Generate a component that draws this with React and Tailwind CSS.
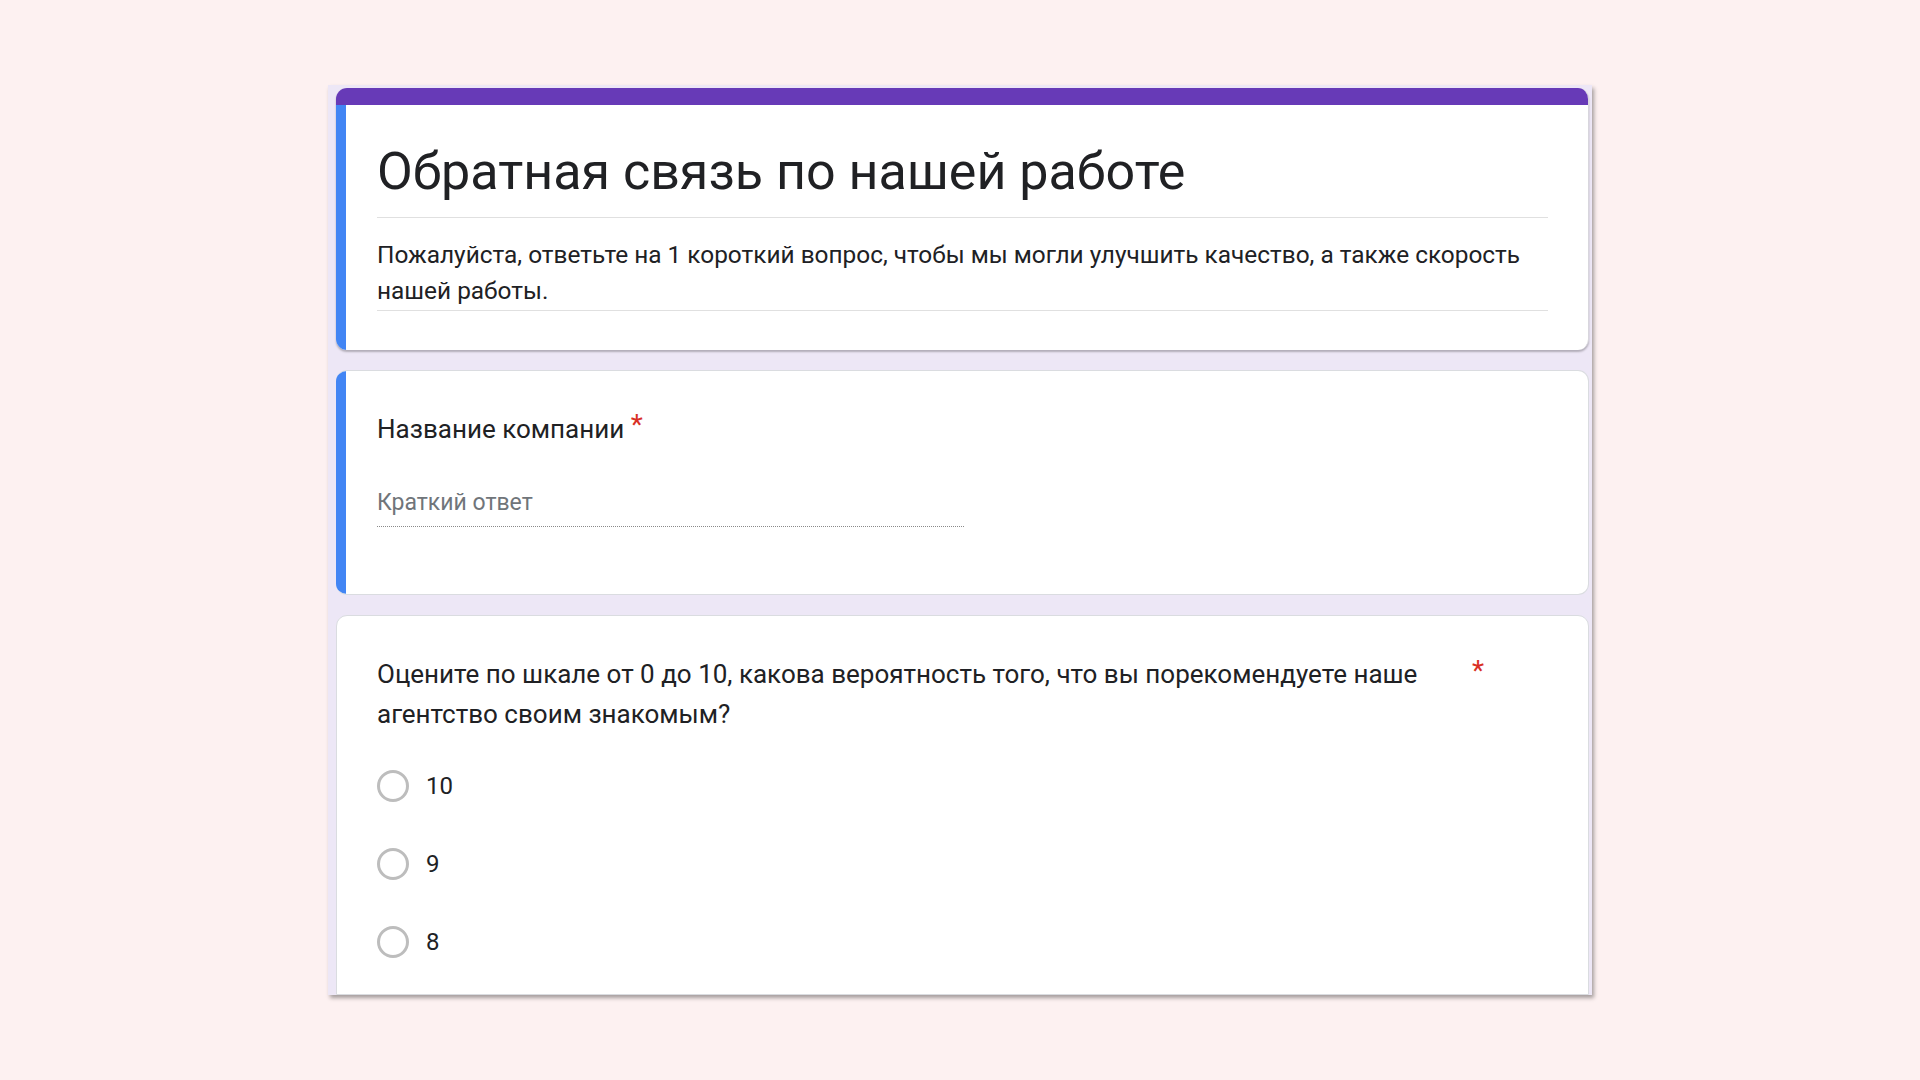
import React from "react";

function Radio({ label }) {
  return (
    <div className="flex items-center h-[32px]">
      <div className="w-[32px] h-[32px] rounded-full border-[3px] border-[#bdbdbd] box-border" />
      <span className="ml-[17px] text-[24px] text-[#202124] leading-[32px]">{label}</span>
    </div>
  );
}

export default function App() {
  return (
    <div
      className="min-h-[1080px] w-full bg-[#fdf1f1] pt-[85px]"
      style={{ fontFamily: "Roboto, 'Noto Sans', Arial, sans-serif" }}
    >
      <div className="mx-auto w-[1264px] h-[910px] overflow-hidden bg-[#ede7f6] pl-[8px] pr-[3px] pt-[3px] shadow-[2px_3px_4px_rgba(0,0,0,0.35)] flex flex-col">
        {/* Header card */}
        <div className="rounded-[11px] overflow-hidden bg-white flex flex-col shadow-[0_2px_2px_rgba(0,0,0,0.25)] border-r border-[#d8d6dd] shrink-0">
          <div className="h-[17px] bg-[#673ab7]" />
          <div className="flex">
            <div className="w-[10px] bg-[#4285f4] shrink-0" />
            <div className="flex-1 pl-[31px] pr-[40px] pt-[35px] pb-[39px]">
              <div className="text-[52px] leading-[64px] text-[#202124] pb-[13px] border-b border-[#e0e0e0]">
                Обратная связь по нашей работе
              </div>
              <div className="mt-[19px] text-[24.4px] leading-[36px] text-[#202124] pb-[1px] border-b border-[#e0e0e0]">
                Пожалуйста, ответьте на 1 короткий вопрос, чтобы мы могли улучшить качество, а также скорость нашей работы.
              </div>
            </div>
          </div>
        </div>

        {/* Company name card */}
        <div className="mt-[20px] h-[225px] rounded-[11px] overflow-hidden bg-white flex border border-[#dadce0] border-l-0 shrink-0">
          <div className="w-[10px] bg-[#4285f4] shrink-0" />
          <div className="flex-1 pl-[31px] pr-[40px] pt-[40px]">
            <div className="text-[26px] leading-[36px] text-[#202124]">
              Название компании{" "}
              <span className="relative -top-[4px] text-[28px] text-[#d93025]">*</span>
            </div>
            <div className="mt-[40px] w-[587px] border-b border-dotted border-[#8a8a8a] pb-[7px]">
              <span className="text-[23px] leading-[32px] text-[#70757a]">Краткий ответ</span>
            </div>
          </div>
        </div>

        {/* Rating card */}
        <div className="mt-[20px] flex-1 rounded-t-[11px] bg-white border border-[#dadce0] pl-[40px] pr-[40px] pt-[38px]">
          <div className="flex items-start">
            <div className="w-[1090px] text-[26px] leading-[40px] text-[#202124]">
              Оцените по шкале от 0 до 10, какова вероятность того, что вы порекомендуете наше агентство своим знакомым?
            </div>
            <span className="relative -top-[3px] ml-[5px] text-[28px] leading-[40px] text-[#d93025]">*</span>
          </div>
          <div className="mt-[36px] flex flex-col gap-[46px]">
            <Radio label="10" />
            <Radio label="9" />
            <Radio label="8" />
          </div>
        </div>
      </div>
    </div>
  );
}
